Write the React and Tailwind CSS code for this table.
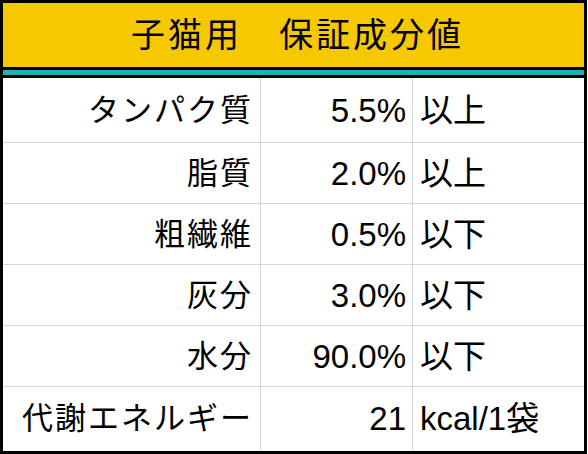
export default function App() {
  const rows = [
    { label: "タンパク質", value: "5.5%", unit: "以上", h: "h-[64px]" },
    { label: "脂質", value: "2.0%", unit: "以上", h: "h-[61px]" },
    { label: "粗繊維", value: "0.5%", unit: "以下", h: "h-[61px]" },
    { label: "灰分", value: "3.0%", unit: "以下", h: "h-[61px]" },
    { label: "水分", value: "90.0%", unit: "以下", h: "h-[61px]" },
    { label: "代謝エネルギー", value: "21", unit: "kcal/1袋", h: "h-[64px]" },
  ];
  const font = { fontFamily: '"Liberation Sans", "Noto Sans CJK JP", sans-serif' };
  return (
    <div className="w-[588px] h-[454px] bg-white" style={font}>
      <div className="w-[587px] h-[454px] border-[3px] border-black flex flex-col text-black">
        <div className="h-[64px] bg-[#f6c800] flex items-center justify-center">
          <span className="text-[34px] tracking-[3px] leading-none pl-[8px]">子猫用　保証成分値</span>
        </div>
        <div className="h-[3px] bg-black" />
        <div className="h-[5px] bg-[#1cb5b3]" />
        <div className="h-[3px] bg-black" />
        {rows.map((r, i) => (
          <div
            key={i}
            className={`flex ${r.h} ${i > 0 ? "border-t border-[#d3d8df]" : ""}`}
          >
            <div className="w-[258px] border-r border-[#d3d8df] flex items-center justify-end pr-[7px]">
              <span className="text-[31px] tracking-[2px] leading-none">{r.label}</span>
            </div>
            <div className="w-[152px] border-r border-[#d3d8df] flex items-center justify-end pr-[6px]">
              <span className="text-[33px] leading-none">{r.value}</span>
            </div>
            <div className="flex-1 flex items-center pl-[7px]">
              <span className="text-[33px] leading-none">{r.unit}</span>
            </div>
          </div>
        ))}
      </div>
    </div>
  );
}
